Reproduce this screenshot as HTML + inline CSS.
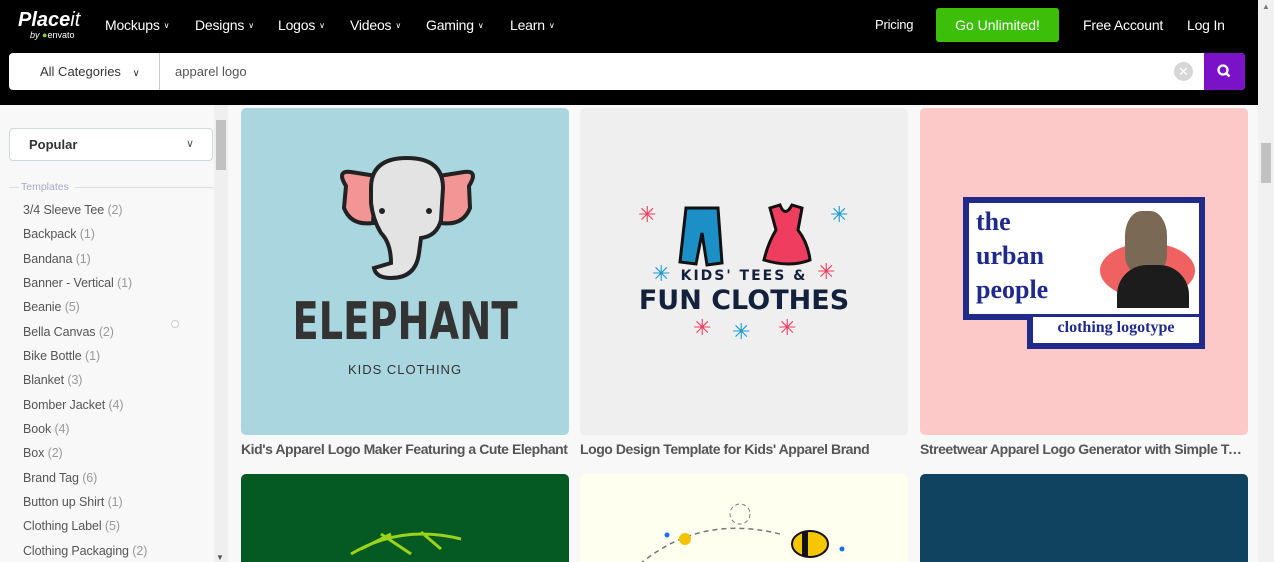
<!DOCTYPE html>
<html style="width:1274px;height:562px;overflow:hidden"><head><meta charset="utf-8"><style>
*{box-sizing:border-box;margin:0;padding:0}
body{width:1274px;height:562px;overflow:hidden;background:#f8f8f8;font-family:"Liberation Sans",sans-serif;position:relative}
.hdr{position:absolute;left:0;top:0;width:1258px;height:105px;background:#000}
.nav{position:absolute;top:17px;color:#fff;font-size:14px;letter-spacing:-0.2px}
.nav span.c{font-size:8px;margin-left:4px;vertical-align:2px}
.search{position:absolute;left:9px;top:53px;width:1236px;height:37px;background:#fff;border-radius:4px}
.sb{position:absolute;right:0;top:0;width:41px;height:37px;background:#7a12c8;border-radius:0 4px 4px 0}
.pscroll{position:absolute;left:1258px;top:0;width:16px;height:562px;background:#f1f1f1}
.side{position:absolute;left:0;top:105px;width:214px;height:457px;background:#f8f8f8}
.iscroll{position:absolute;left:214px;top:105px;width:14px;height:457px;background:#efefef}
.item{position:absolute;left:23px;font-size:12.5px;color:#555;letter-spacing:-0.1px}
.item b{font-weight:normal;color:#999}
.card{position:absolute;width:328px;height:327px;border-radius:5px;overflow:hidden}
.cap{position:absolute;top:441px;font-size:14px;color:#555;width:328px;white-space:nowrap;overflow:hidden;text-overflow:ellipsis;font-weight:bold;letter-spacing:-0.45px}
</style></head><body>
<div class="hdr">
 <div style="position:absolute;left:18px;top:9px;color:#fff;font:italic bold 20px 'Liberation Sans',sans-serif">Place<span style="font-weight:normal">it</span></div>
 <div style="position:absolute;left:30px;top:30px;color:#fff;font-size:9px"><i>by</i> <span style="color:#8c3">●</span>envato</div>
 <div class="nav" style="left:105px">Mockups<span class="c">∨</span></div>
 <div class="nav" style="left:195px">Designs<span class="c">∨</span></div>
 <div class="nav" style="left:278px">Logos<span class="c">∨</span></div>
 <div class="nav" style="left:350px">Videos<span class="c">∨</span></div>
 <div class="nav" style="left:426px">Gaming<span class="c">∨</span></div>
 <div class="nav" style="left:510px">Learn<span class="c">∨</span></div>
 <div class="nav" style="left:875px;font-size:13px;top:17px">Pricing</div>
 <div style="position:absolute;left:936px;top:8px;width:123px;height:34px;background:#3dbf0a;border-radius:3px;color:#fff;font-size:14px;text-align:center;line-height:34px">Go Unlimited!</div>
 <div class="nav" style="left:1083px">Free Account</div>
 <div class="nav" style="left:1187px">Log In</div>
 <div class="search">
  <div style="position:absolute;left:31px;top:11px;font-size:13px;color:#333">All Categories <span style="font-size:10px;margin-left:8px">∨</span></div>
  <div style="position:absolute;left:150px;top:0;width:1px;height:37px;background:#ccc"></div>
  <div style="position:absolute;left:166px;top:11px;font-size:13px;color:#555">apparel logo</div>
  <div style="position:absolute;left:1165px;top:9px;width:19px;height:19px;border-radius:50%;background:#d6d6d6;color:#fff;font-size:13px;text-align:center;line-height:19px">✕</div>
  <div class="sb"><svg width="41" height="37"><circle cx="19" cy="17" r="4.5" stroke="#fff" stroke-width="2.3" fill="none"/><line x1="22" y1="20" x2="25.5" y2="23.5" stroke="#fff" stroke-width="2.5"/></svg></div>
 </div>
</div>
<div class="pscroll"><div style="position:absolute;left:3px;top:143px;width:10px;height:40px;background:#c1c1c1"></div><div style="position:absolute;left:4px;top:2px;font-size:8px;color:#777">▲</div></div>
<div class="side">
 <div style="position:absolute;left:9px;top:23px;width:204px;height:33px;border:1px solid #cfd8dc;border-radius:4px;background:#fff"><span style="position:absolute;left:19px;top:8px;font-size:13px;color:#333;font-weight:bold">Popular</span><span style="position:absolute;right:18px;top:8px;font-size:11px;color:#555">∨</span></div>
 <div style="position:absolute;left:9px;top:82px;width:10px;height:1px;background:#ddd"></div>
 <div style="position:absolute;left:21px;top:76px;font-size:10.5px;color:#a6a9c0">Templates</div>
 <div style="position:absolute;left:75px;top:82px;width:138px;height:1px;background:#ddd"></div>
</div>
<div class="item" style="top:203px">3/4 Sleeve Tee <b>(2)</b></div>
<div class="item" style="top:227px">Backpack <b>(1)</b></div>
<div class="item" style="top:252px">Bandana <b>(1)</b></div>
<div class="item" style="top:276px">Banner - Vertical <b>(1)</b></div>
<div class="item" style="top:300px">Beanie <b>(5)</b></div>
<div class="item" style="top:325px">Bella Canvas <b>(2)</b></div>
<div class="item" style="top:349px">Bike Bottle <b>(1)</b></div>
<div class="item" style="top:373px">Blanket <b>(3)</b></div>
<div class="item" style="top:398px">Bomber Jacket <b>(4)</b></div>
<div class="item" style="top:422px">Book <b>(4)</b></div>
<div class="item" style="top:446px">Box <b>(2)</b></div>
<div class="item" style="top:471px">Brand Tag <b>(6)</b></div>
<div class="item" style="top:495px">Button up Shirt <b>(1)</b></div>
<div class="item" style="top:519px">Clothing Label <b>(5)</b></div>
<div class="item" style="top:544px">Clothing Packaging <b>(2)</b></div>
<div style="position:absolute;left:171px;top:320px;width:8px;height:8px;border-radius:50%;border:1px solid #ccc;background:#fff"></div>
<div class="iscroll"><div style="position:absolute;left:2px;top:15px;width:10px;height:50px;background:#c1c1c1"></div><div style="position:absolute;left:2px;bottom:0;font-size:8px;color:#555">▼</div></div>

<div class="card" style="left:241px;top:108px;background:#a9d6df">
 <svg width="328" height="327" style="position:absolute;left:0;top:0">
  <path d="M105 78 Q95 62 110 64 L135 68 L132 115 Q110 118 103 100 Z" fill="#f39595" stroke="#222" stroke-width="4"/>
  <path d="M228 78 Q238 62 223 64 L198 68 L200 115 Q222 118 229 100 Z" fill="#f39595" stroke="#222" stroke-width="4"/>
  <path d="M130 80 Q130 50 166 50 Q202 50 202 80 L200 112 Q196 128 180 130 L178 145 Q175 170 150 170 Q135 170 133 160 Q140 158 150 155 Q150 135 140 125 Q132 112 130 95 Z" fill="#e3e3e3" stroke="#222" stroke-width="4"/>
  <circle cx="141" cy="103" r="3" fill="#222"/><circle cx="188" cy="103" r="3" fill="#222"/>
 </svg>
 <div style="position:absolute;left:0;width:328px;top:188px;text-align:center;font:bold 52px/1 'DejaVu Sans Condensed','Liberation Sans',sans-serif;color:#333;transform:scaleX(0.82)">ELEPHANT</div>
 <div style="position:absolute;left:0;width:328px;top:254px;text-align:center;font-size:13px;color:#333;letter-spacing:1px">KIDS CLOTHING</div>
</div>
<div class="card" style="left:580px;top:108px;background:#efefef">
 <svg width="328" height="327" style="position:absolute;left:0;top:0">
  <path d="M106 100 L138 100 L142 155 L127 157 L122 125 L116 156 L100 154 Z" fill="#1b8fc6" stroke="#111" stroke-width="3"/>
  <path d="M190 100 L200 97 Q205 110 212 97 L222 100 L218 122 Q228 135 230 152 Q210 160 184 152 Q188 135 196 122 Z" fill="#ef3d5f" stroke="#111" stroke-width="3"/>
  <g fill="#ef3d5f" font-size="22"><text x="58" y="114">✳</text><text x="113" y="227">✳</text><text x="198" y="227">✳</text><text x="237" y="171">✳</text></g>
  <g fill="#1b9acb" font-size="22"><text x="250" y="114">✳</text><text x="72" y="173">✳</text><text x="152" y="231">✳</text></g>
 </svg>
 <div style="position:absolute;left:0;width:328px;top:160px;text-align:center;font:bold 14px 'DejaVu Sans',sans-serif;color:#14213d;letter-spacing:2px">KIDS' TEES &amp;</div>
 <div style="position:absolute;left:0;width:328px;top:177px;text-align:center;font:bold 27px 'DejaVu Sans',sans-serif;color:#14213d">FUN CLOTHES</div>
</div>
<div class="card" style="left:920px;top:108px;background:#fcc8c8">
 <div style="position:absolute;left:43px;top:89px;width:242px;height:123px;background:#fff;border:6px solid #1f2a8a"></div>
 <div style="position:absolute;left:107px;top:210px;width:178px;height:31px;background:#fff;border:6px solid #1f2a8a;border-top:0"></div>
 <div style="position:absolute;left:113px;top:209px;width:166px;height:3px;background:#fff"></div>
 <div style="position:absolute;left:175px;top:95px;width:104px;height:105px;overflow:hidden"><div style="position:absolute;left:5px;top:40px;width:95px;height:55px;border-radius:50%;background:#f06262"></div><div style="position:absolute;left:30px;top:8px;width:42px;height:62px;background:#7a6a55;border-radius:40% 40% 30% 30%"></div><div style="position:absolute;left:22px;top:62px;width:72px;height:50px;background:#1c1c1c;border-radius:30px 30px 0 0"></div></div>
 <div style="position:absolute;left:56px;top:97px;font:bold 26px/34px 'Liberation Serif',serif;color:#1f2a8a">the<br>urban<br>people</div>
 <div style="position:absolute;left:113px;top:211px;width:166px;text-align:center;font:bold 16px 'Liberation Serif',serif;color:#1f2a8a">clothing logotype</div>
</div>
<div class="cap" style="left:241px">Kid's Apparel Logo Maker Featuring a Cute Elephant</div>
<div class="cap" style="left:580px">Logo Design Template for Kids' Apparel Brand</div>
<div class="cap" style="left:920px;width:326px">Streetwear Apparel Logo Generator with Simple Text</div>

<div class="card" style="left:241px;top:474px;background:#055a23;height:88px;border-radius:5px 5px 0 0">
 <svg width="328" height="100"><path d="M110 80 Q160 50 220 65 M120 75 L150 60 M140 60 L170 80 M180 58 L200 75" stroke="#9bd21a" stroke-width="3" fill="none"/></svg>
</div>
<div class="card" style="left:580px;top:474px;background:#fffff0;height:88px;border-radius:5px 5px 0 0">
 <svg width="328" height="100"><path d="M60 90 Q120 40 200 60" stroke="#777" stroke-width="1.5" stroke-dasharray="5 4" fill="none"/><circle cx="160" cy="40" r="10" stroke="#777" stroke-dasharray="4 3" fill="none"/><circle cx="105" cy="65" r="6" fill="#f3c200"/><ellipse cx="230" cy="70" rx="18" ry="13" fill="#f7c600" stroke="#111" stroke-width="2"/><rect x="222" y="58" width="6" height="24" fill="#111"/><circle cx="87" cy="61" r="2.5" fill="#1a6ff0"/><circle cx="262" cy="75" r="2.5" fill="#1a6ff0"/></svg>
</div>
<div class="card" style="left:920px;top:474px;background:#10435f;height:88px;border-radius:5px 5px 0 0"></div>
</body></html>
